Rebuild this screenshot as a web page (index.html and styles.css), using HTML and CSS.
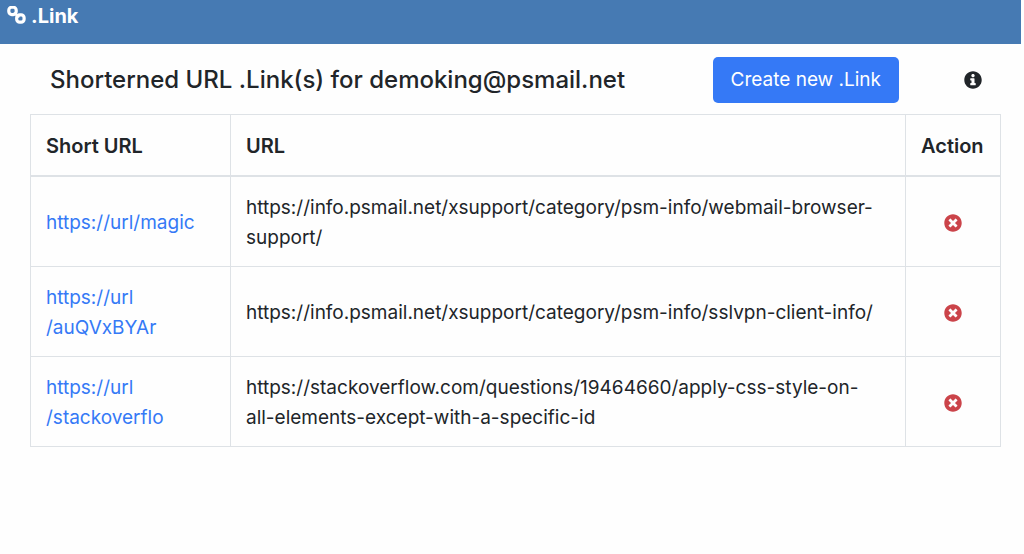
FILE: index.html
```html
<!DOCTYPE html>
<html lang="en">
<head>
  <meta charset="UTF-8">
  <title>.Link</title>
  <link rel="stylesheet" href="styles.css">
</head>
<body>
  <header class="topbar">
    <svg class="logo" viewBox="0 0 20 20" fill="none" stroke="currentColor" stroke-width="3.2" stroke-linecap="round" aria-hidden="true">
      <rect x="1.800" y="1.200" width="7.400" height="7.400" rx="3"/>
      <rect x="9.700" y="8.800" width="7.400" height="7.400" rx="3"/>
      <path d="M7.500 7.400l4 3.200" stroke-width="2.400"/>
    </svg>
    <span>.Link</span>
  </header>

  <main class="content">
    <div class="heading">
      <h1 class="title">Shorterned URL .Link(s) for demoking@psmail.net</h1>
      <button class="btn-create" type="button">Create new .Link</button>
      <button class="btn-icon info" type="button" aria-label="Info">
        <svg viewBox="0 0 512 512" aria-hidden="true"><path fill="currentColor" d="M256 8C119.043 8 8 119.083 8 256c0 136.997 111.043 248 248 248s248-111.003 248-248C504 119.083 392.957 8 256 8zm0 80c28 0 48 20 48 45s-20 45-48 45-48-20-48-45 20-45 48-45zm78 300c0 9-6 15-15 15H193c-9 0-15-6-15-15v-34c0-9 6-15 15-15h20v-72h-20c-9 0-15-6-15-15v-34c0-9 6-15 15-15h91c9 0 15 6 15 15v121h20c9 0 15 6 15 15v34z"/></svg>
      </button>
    </div>

    <table class="links">
      <thead>
        <tr>
          <th class="col-short">Short URL</th>
          <th>URL</th>
          <th class="col-action">Action</th>
        </tr>
      </thead>
      <tbody>
        <tr>
          <td><a href="#">https://url/magic</a></td>
          <td class="url">https://info.psmail.net/xsupport/category/psm-info/webmail-browser-support/</td>
          <td>
            <button class="btn-icon delete" type="button" aria-label="Delete magic">
              <svg viewBox="0 0 512 512" aria-hidden="true"><path fill="currentColor" d="M256 8C119 8 8 119 8 256s111 248 248 248 248-111 248-248S393 8 256 8zm121.600 313.100c4.700 4.700 4.700 12.300 0 17L338 377.600c-4.700 4.700-12.300 4.700-17 0L256 312l-65.100 65.600c-4.700 4.700-12.300 4.700-17 0L134.400 338c-4.700-4.700-4.700-12.300 0-17l65.600-65-65.600-65.100c-4.700-4.700-4.700-12.300 0-17l39.600-39.600c4.700-4.700 12.300-4.700 17 0l65 65.700 65.100-65.600c4.700-4.700 12.300-4.700 17 0l39.600 39.600c4.700 4.700 4.700 12.300 0 17L312 256l65.600 65.100z"/></svg>
            </button>
          </td>
        </tr>
        <tr>
          <td><a href="#">https://url<wbr>/auQVxBYAr</a></td>
          <td class="url">https://info.psmail.net/xsupport/category/psm-info/sslvpn-client-info/</td>
          <td>
            <button class="btn-icon delete" type="button" aria-label="Delete auQVxBYAr">
              <svg viewBox="0 0 512 512" aria-hidden="true"><path fill="currentColor" d="M256 8C119 8 8 119 8 256s111 248 248 248 248-111 248-248S393 8 256 8zm121.600 313.100c4.700 4.700 4.700 12.300 0 17L338 377.600c-4.700 4.700-12.300 4.700-17 0L256 312l-65.100 65.600c-4.700 4.700-12.300 4.700-17 0L134.400 338c-4.700-4.700-4.700-12.300 0-17l65.600-65-65.600-65.100c-4.700-4.700-4.700-12.300 0-17l39.600-39.600c4.700-4.700 12.300-4.700 17 0l65 65.700 65.100-65.600c4.700-4.700 12.300-4.700 17 0l39.600 39.600c4.700 4.700 4.700 12.300 0 17L312 256l65.600 65.100z"/></svg>
            </button>
          </td>
        </tr>
        <tr>
          <td><a href="#">https://url<wbr>/stackoverflo</a></td>
          <td class="url">https://stackoverflow.com/questions/19464660/apply-css-style-on-all-elements-except-with-a-specific-id</td>
          <td>
            <button class="btn-icon delete" type="button" aria-label="Delete stackoverflo">
              <svg viewBox="0 0 512 512" aria-hidden="true"><path fill="currentColor" d="M256 8C119 8 8 119 8 256s111 248 248 248 248-111 248-248S393 8 256 8zm121.600 313.100c4.700 4.700 4.700 12.300 0 17L338 377.600c-4.700 4.700-12.300 4.700-17 0L256 312l-65.100 65.600c-4.700 4.700-12.300 4.700-17 0L134.400 338c-4.700-4.700-4.700-12.300 0-17l65.600-65-65.600-65.100c-4.700-4.700-4.700-12.300 0-17l39.600-39.600c4.700-4.700 12.300-4.700 17 0l65 65.700 65.100-65.600c4.700-4.700 12.300-4.700 17 0l39.600 39.600c4.700 4.700 4.700 12.300 0 17L312 256l65.600 65.100z"/></svg>
            </button>
          </td>
        </tr>
      </tbody>
    </table>
  </main>
</body>
</html>
```

FILE: styles.css
```css
* {
  box-sizing: border-box;
}
body {
  margin: 0;
  background: #fefefe;
  color: #212529;
  font-family: Inter, "Liberation Sans", sans-serif;
  font-size: 19px;
  line-height: 30px;
}
.topbar {
  display: flex;
  align-items: center;
  gap: 4px;
  margin-right: 3px;
  padding: 1px 7px 13px;
  background: #467ab3;
  color: #fff;
  font-size: 20px;
  font-weight: 700;
}
.logo {
  width: 20px;
  height: 20px;
}
.content {
  padding: 13px 23px 0 30px;
}
.heading {
  display: flex;
  align-items: center;
  padding: 0 19px 11px 20px;
}
.title {
  flex: 1;
  margin: 0;
  font-size: 24px;
  font-weight: 500;
}
.btn-create {
  padding: 8px 18px;
  border: 0;
  border-radius: 5px;
  background: #3579f6;
  color: #fff;
  font: inherit;
  cursor: pointer;
}
.btn-icon {
  display: flex;
  padding: 0;
  border: 0;
  background: none;
  cursor: pointer;
}
.btn-icon svg {
  width: 18px;
  height: 18px;
}
.info {
  margin-left: 65px;
  color: #212529;
}
.links {
  width: 100%;
  border-collapse: collapse;
}
.links th,
.links td {
  padding: 16px 15px 13px;
  border: 1px solid #dee2e6;
  text-align: left;
  vertical-align: middle;
  overflow-wrap: anywhere;
}
.links th {
  padding-bottom: 14px;
  border-bottom-width: 2px;
  font-size: 20px;
  font-weight: 600;
}
.links .url {
  padding-right: 20px;
}
.col-short {
  width: 200px;
}
.links .col-action {
  width: 95px;
  overflow-wrap: normal;
}
.links a {
  color: #3579f6;
  text-decoration: none;
}
.delete {
  margin: 0 auto;
  color: #cb444a;
}
```
